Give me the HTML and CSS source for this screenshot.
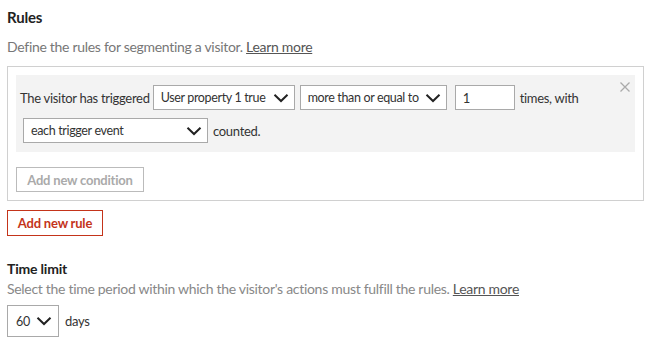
FILE: index.html
```html
<!DOCTYPE html>
<html>
<head>
<meta charset="utf-8">
<link rel="stylesheet" href="styles.css">
</head>
<body>
<div class="page">
  <h2 class="title">Rules</h2>
  <p class="desc">Define the rules for segmenting a visitor. <a class="link">Learn more</a></p>
  <div class="rulebox">
    <div class="condition">
      <div class="row">
        <span class="txt">The visitor has triggered</span>
        <div class="select s1"><span>User property 1 true</span><svg class="chev" viewBox="0 0 16 10"><path d="M1.5 1.8 L8 8 L14.5 1.8" /></svg></div>
        <div class="select s2"><span>more than or equal to</span><svg class="chev" viewBox="0 0 16 10"><path d="M1.5 1.8 L8 8 L14.5 1.8" /></svg></div>
        <div class="input"><span>1</span></div>
        <span class="txt">times, with</span>
      </div>
      <div class="row row2">
        <div class="select s3"><span>each trigger event</span><svg class="chev" viewBox="0 0 16 10"><path d="M1.5 1.8 L8 8 L14.5 1.8" /></svg></div>
        <span class="txt">counted.</span>
      </div>
      <svg class="close" viewBox="0 0 10 10"><path d="M0.5 0.5 L9.5 9.5 M9.5 0.5 L0.5 9.5" /></svg>
    </div>
    <button class="btn btn-cond">Add new condition</button>
  </div>
  <button class="btn btn-rule">Add new rule</button>
  <h3 class="subtitle">Time limit</h3>
  <p class="desc2">Select the time period within which the visitor's actions must fulfill the rules. <a class="link">Learn more</a></p>
  <div class="row">
    <div class="select s4"><span>60</span><svg class="chev" viewBox="0 0 16 10"><path d="M1.5 1.8 L8 8 L14.5 1.8" /></svg></div>
    <span class="txt days">days</span>
  </div>
</div>
</body>
</html>
```
FILE: styles.css
```css
* { box-sizing: border-box; }
body {
  margin: 0;
  font-family: "Lato", "Liberation Sans", sans-serif;
  font-size: 13px;
  letter-spacing: -0.3px;
  color: #333;
  background: #fff;
}
.page {
  padding: 6px 8px 0 7px;
}
.title {
  margin: 0;
  font-size: 15px;
  font-weight: 700;
  line-height: 22px;
  color: #222;
  letter-spacing: -0.2px;
}
.desc {
  margin: 9px 0 0;
  color: #777;
  font-size: 14px;
  line-height: 20px;
}
.link {
  color: #555;
  text-decoration: underline;
}
.rulebox {
  margin-top: 9px;
  border: 1px solid #d0d0d0;
  padding: 8px 8px 8px 8px;
  width: 637px;
}
.condition {
  position: relative;
  background: #f3f3f3;
  padding: 10px 4px 9px 4px;
}
.row {
  display: flex;
  align-items: center;
  gap: 5px;
}
.row2 {
  margin-top: 8px;
  padding-left: 3px;
}
.txt {
  color: #333;
  white-space: nowrap;
}
.select {
  display: flex;
  align-items: center;
  justify-content: space-between;
  height: 25px;
  border: 1px solid #a9a9a9;
  background: #fff;
  padding: 0 5px 0 7px;
  color: #333;
  white-space: nowrap;
}
.select span {
  font-size: 12.5px;
  letter-spacing: -0.35px;
}
.chev {
  width: 16px;
  height: 10px;
  fill: none;
  stroke: #222;
  stroke-width: 2;
  flex: none;
}
.s1 { width: 142px; margin-left: -2px; }
.s2 { width: 147px; }
.input {
  width: 60px;
  height: 25px;
  border: 1px solid #a9a9a9;
  background: #fff;
  display: flex;
  align-items: center;
  padding-left: 7px;
  margin-left: 3px;
}
.s3 { width: 185px; }
.close {
  position: absolute;
  right: 5px;
  top: 7px;
  width: 10px;
  height: 10px;
  stroke: #aaa;
  stroke-width: 1.3;
}
.btn {
  font-family: inherit;
  font-size: 13px;
  letter-spacing: -0.2px;
  background: #fff;
  cursor: pointer;
}
.btn-cond {
  margin-top: 15px;
  height: 25px;
  width: 128px;
  border: 1px solid #bbb;
  color: #aaa;
  font-weight: 700;
  padding: 0;
}
.btn-rule {
  margin-top: 9px;
  height: 26px;
  width: 96px;
  border: 1px solid #c4341a;
  color: #c4341a;
  font-weight: 700;
  padding: 0;
  display: block;
}
.subtitle {
  margin: 23px 0 0;
  font-size: 14px;
  font-weight: 700;
  line-height: 20px;
  color: #222;
  letter-spacing: -0.2px;
}
.desc2 {
  margin: 0;
  color: #888;
  font-size: 14px;
  line-height: 20px;
}
.s4 {
  margin-top: 6px;
  width: 52px;
  height: 32px;
  padding: 0 6px 0 8px;
}
.days { margin-top: 6px; margin-left: 1px; }
```
